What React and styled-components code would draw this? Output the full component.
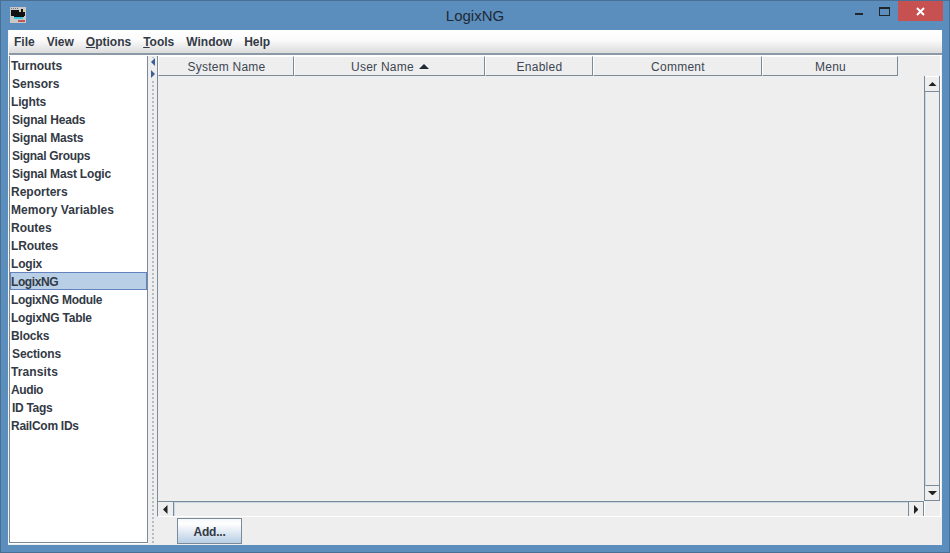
import React from 'react';
import styled, { createGlobalStyle } from 'styled-components';

const GlobalStyle = createGlobalStyle`
    html, body {
        margin: 0;
        padding: 0;
        background: #5a8dbd;
    }
    * {
        box-sizing: border-box;
    }
`

const Frame = styled.div`
    width: 950px;
    height: 553px;
    display: flex;
    flex-direction: column;
    background: #5b8ebd;
    border: 1px solid #4a6f94;
    font-family: "Liberation Sans", Arial, sans-serif;
    color: #333a45;
    overflow: hidden;
`

const TitleBar = styled.div`
    position: relative;
    height: 29px;
    flex: none;
    display: flex;
    align-items: center;
    justify-content: center;
    font-size: 15px;
    color: #1f2a36;
`

const AppIcon = styled.svg`
    position: absolute;
    left: 9px;
    top: 6px;
`

const WinButtons = styled.div`
    position: absolute;
    right: 6px;
    top: 0;
    display: flex;
    align-items: flex-start;
`

const WinButton = styled.div`
    width: ${p => p.$w}px;
    height: 20px;
    display: flex;
    align-items: center;
    justify-content: center;
    background: ${p => p.$close ? '#c75050' : 'transparent'};
`

const MinIcon = styled.svg`
    margin: 6px 0 0 5px;
`

const MaxIcon = styled.svg`
    margin: 1px 0 0 0;
`

const Client = styled.div`
    flex: 1;
    margin: 0 7px 7px 7px;
    display: flex;
    flex-direction: column;
    background: #eeeeee;
    border-left: 1px solid #f4f4f4;
    min-height: 0;
`

const MenuBar = styled.div`
    height: 23px;
    flex: none;
    display: flex;
    align-items: center;
    padding: 0 0 0 5px;
    gap: 12px;
    background: linear-gradient(#ffffff, #fbfbfb 40%, #dcdcdc);
    border-top: 1px solid #ffffff;
    font-size: 12px;
    font-weight: 700;
`

const MenuItem = styled.span`
    u {
        text-decoration: underline;
    }
`

const MenuRule = styled.div`
    height: 2px;
    flex: none;
    background: #8b98a5;
`

const Body = styled.div`
    flex: 1;
    display: flex;
    min-height: 0;
    border-top: 1px solid #ffffff;
`

const SideList = styled.ul`
    width: 139px;
    flex: none;
    margin: 0 0 2px 0;
    padding: 0;
    list-style: none;
    background: #ffffff;
    border-left: 1px solid #7a8a99;
    border-right: 1px solid #7a8a99;
    border-bottom: 1px solid #7a8a99;
    box-shadow: 0 1px 0 #ffffff;
`

const SideItem = styled.li`
    height: 18px;
    line-height: 18px;
    padding-left: ${p => p.$indent || 0}px;
    font-size: 12px;
    font-weight: 700;
    white-space: nowrap;
    letter-spacing: ${p => p.$track || 0}px;
    background: ${p => p.$active ? '#b8cfe5' : 'transparent'};
    border: 1px solid ${p => p.$active ? '#6382bf' : 'transparent'};
`

const Divider = styled.div`
    position: relative;
    width: 9px;
    flex: none;
    background-image: radial-gradient(#77838f 0.6px, transparent 0.8px);
    background-size: 4px 4px;
    background-position: 3px 0;
    background-repeat: repeat-y;
`

const Arrows = styled.div`
    position: absolute;
    left: 3px;
    top: 2px;
    display: flex;
    flex-direction: column;
    gap: 4px;
    background: #eeeeee;
    padding-bottom: 2px;
`

const RightPane = styled.div`
    flex: 1;
    min-width: 0;
    display: flex;
    flex-direction: column;
`

const TableArea = styled.div`
    flex: 1;
    min-height: 0;
    display: flex;
    flex-direction: column;
    margin-right: 1px;
    border-left: 1px solid #7a8a99;
    border-right: 1px solid #ffffff;
    border-bottom: 1px solid #ffffff;
`

const HeaderRow = styled.div`
    display: flex;
    height: 20px;
    flex: none;
`

const HeaderCell = styled.div`
    width: ${p => p.$w}px;
    flex: none;
    display: flex;
    align-items: center;
    justify-content: center;
    gap: 5px;
    padding: 2px 0 0 1px;
    font-size: 12px;
    letter-spacing: 0.25px;
    color: #3d4652;
    background: #eeeeee;
    border-top: 1px solid #ffffff;
    border-left: 1px solid #ffffff;
    border-right: 1px solid #7a8a99;
    border-bottom: 1px solid #7a8a99;
`

const SortMark = styled.span`
    display: flex;
    margin-top: -2px;
`

const ScrollMiddle = styled.div`
    flex: 1;
    min-height: 0;
    display: flex;
    justify-content: flex-end;
`

const VScroll = styled.div`
    width: 16px;
    flex: none;
    display: flex;
    flex-direction: column;
    border-left: 1px solid #7a8a99;
    border-right: 1px solid #7a8a99;
    border-bottom: 1px solid #7a8a99;
`

const ScrollBtn = styled.div`
    flex: none;
    width: ${p => p.$w || 'auto'};
    height: ${p => p.$h || 'auto'};
    display: flex;
    align-items: center;
    justify-content: center;
    background: #eeeeee;
    border-top: ${p => p.$top ? '1px solid #ffffff' : '0'};
    border-bottom: ${p => p.$bottom ? '1px solid #7a8a99' : '0'};
    border-left: ${p => p.$left ? '1px solid #7a8a99' : '0'};
    border-right: ${p => p.$right ? '1px solid #7a8a99' : '0'};
`

const VTrack = styled.div`
    flex: 1;
    border-left: 1px solid #c9d6e3;
    border-bottom: 1px solid #7a8a99;
`

const HRow = styled.div`
    height: 15px;
    flex: none;
    display: flex;
`

const HScroll = styled.div`
    flex: 1;
    display: flex;
    border-top: 1px solid #7a8a99;
`

const HTrack = styled.div`
    flex: 1;
    border-left: 1px solid #c9d6e3;
    border-top: 1px solid #c9d6e3;
`

const Corner = styled.div`
    width: 16px;
    flex: none;
    border-left: 1px solid #ffffff;
`

const Footer = styled.div`
    height: 28px;
    flex: none;
    padding: 1px 0 0 20px;
`

const AddButton = styled.button`
    display: block;
    width: 65px;
    height: 26px;
    padding: 2px 0 0 0;
    font-family: inherit;
    font-size: 12px;
    font-weight: 700;
    letter-spacing: -0.2px;
    color: #333a45;
    border: 1px solid #7a8a99;
    background: linear-gradient(#f4f8fb, #ffffff 20%, #dfe9f3 55%, #b8cfe5);
`

const Tri = ({ dir, size = 4.5, color = '#222' }) => {
    const pts = {
        up: `0,${size} ${size},0 ${size * 2},${size}`,
        down: `0,0 ${size * 2},0 ${size},${size}`,
        left: `${size},0 ${size},${size * 2} 0,${size}`,
        right: `0,0 0,${size * 2} ${size},${size}`,
    }[dir]
    const vertical = dir === 'up' || dir === 'down'
    return (
        <svg width={vertical ? size * 2 : size} height={vertical ? size : size * 2}>
            <polygon points={pts} fill={color} />
        </svg>
    )
}

const items = [
    { label: 'Turnouts' },
    { label: 'Sensors', indent: 1 },
    { label: 'Lights', track: -0.17 },
    { label: 'Signal Heads', indent: 1, track: -0.17 },
    { label: 'Signal Masts', indent: 1, track: -0.17 },
    { label: 'Signal Groups', indent: 1, track: -0.3 },
    { label: 'Signal Mast Logic', indent: 1, track: -0.18 },
    { label: 'Reporters' },
    { label: 'Memory Variables', track: 0.06 },
    { label: 'Routes' },
    { label: 'LRoutes', track: -0.14 },
    { label: 'Logix', track: -0.2 },
    { label: 'LogixNG', track: -0.4 },
    { label: 'LogixNG Module', track: -0.3 },
    { label: 'LogixNG Table', track: -0.23 },
    { label: 'Blocks', track: -0.17 },
    { label: 'Sections', indent: 1, track: -0.12 },
    { label: 'Transits', track: 0.12 },
    { label: 'Audio', track: -0.4 },
    { label: 'ID Tags', indent: 1, track: -0.3 },
    { label: 'RailCom IDs', track: -0.27 },
]

const columns = [
    { label: 'System Name', w: 136 },
    { label: 'User Name', w: 191, sorted: true },
    { label: 'Enabled', w: 108 },
    { label: 'Comment', w: 169 },
    { label: 'Menu', w: 136 },
]

const App = () => {
    return (
        <Frame>
            <GlobalStyle />
            <TitleBar>
                <AppIcon width="16" height="16" viewBox="0 0 16 16">
                    <rect width="16" height="16" fill="#c8c8c8" />
                    <path d="M1 1h1v1H1zM3 1h1v1H3zM5 1h1v1H5zM7 1h1v1H7z" fill="#777" />
                    <path d="M1 3h8v2h2V2h2v3h2v4h-1v1H4V9H1z" fill="#111" />
                    <rect x="13" y="3" width="2" height="1" fill="#e8e040" />
                    <rect x="4" y="10" width="9" height="2" fill="#35c8d8" />
                    <rect x="8" y="13" width="7" height="2" fill="#c25555" />
                </AppIcon>
                LogixNG
                <WinButtons>
                    <WinButton $w={29}>
                        <MinIcon width="8" height="2"><rect width="8" height="2" fill="#22262b" /></MinIcon>
                    </WinButton>
                    <WinButton $w={27}>
                        <MaxIcon width="11" height="9">
                            <rect x="0.5" y="0.5" width="10" height="8" fill="none" stroke="#22262b" />
                            <rect width="11" height="2" fill="#22262b" />
                        </MaxIcon>
                    </WinButton>
                    <WinButton $w={45} $close>
                        <svg width="9" height="9"><path d="M1 1l7 7M8 1l-7 7" stroke="#fff" strokeWidth="2" /></svg>
                    </WinButton>
                </WinButtons>
            </TitleBar>
            <Client>
                <MenuBar>
                    <MenuItem>File</MenuItem>
                    <MenuItem>View</MenuItem>
                    <MenuItem><u>O</u>ptions</MenuItem>
                    <MenuItem><u>T</u>ools</MenuItem>
                    <MenuItem>Window</MenuItem>
                    <MenuItem>Help</MenuItem>
                </MenuBar>
                <MenuRule />
                <Body>
                    <SideList>
                        {items.map(item => (
                            <SideItem
                                key={item.label}
                                $active={item.label === 'LogixNG'}
                                $indent={item.indent}
                                $track={item.track}
                            >
                                {item.label}
                            </SideItem>
                        ))}
                    </SideList>
                    <Divider>
                        <Arrows>
                            <Tri dir="left" size={4} color="#3c5f96" />
                            <Tri dir="right" size={4} color="#3c5f96" />
                        </Arrows>
                    </Divider>
                    <RightPane>
                        <TableArea>
                            <HeaderRow>
                                {columns.map(c => (
                                    <HeaderCell key={c.label} $w={c.w}>
                                        {c.label}
                                        {c.sorted && <SortMark><Tri dir="up" size={5} color="#1f2a36" /></SortMark>}
                                    </HeaderCell>
                                ))}
                            </HeaderRow>
                            <ScrollMiddle>
                                <VScroll>
                                    <ScrollBtn $h="16px" $top $bottom><Tri dir="up" /></ScrollBtn>
                                    <VTrack />
                                    <ScrollBtn $h="14px"><Tri dir="down" /></ScrollBtn>
                                </VScroll>
                            </ScrollMiddle>
                            <HRow>
                                <HScroll>
                                    <ScrollBtn $w="16px" $right><Tri dir="left" /></ScrollBtn>
                                    <HTrack />
                                    <ScrollBtn $w="16px" $left $right><Tri dir="right" /></ScrollBtn>
                                </HScroll>
                                <Corner />
                            </HRow>
                        </TableArea>
                        <Footer>
                            <AddButton>Add...</AddButton>
                        </Footer>
                    </RightPane>
                </Body>
            </Client>
        </Frame>
    )
}

export default App
